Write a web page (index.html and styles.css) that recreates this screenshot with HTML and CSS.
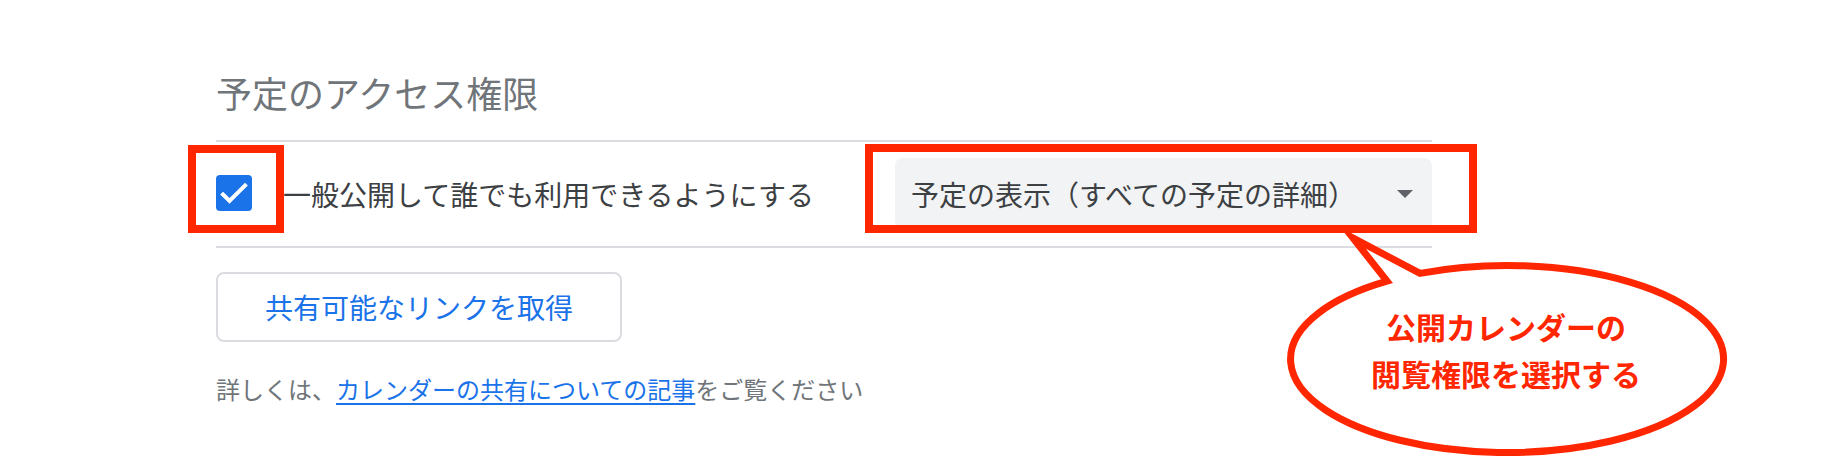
FILE: index.html
```html
<!DOCTYPE html>
<html lang="ja">
<head>
<meta charset="utf-8">
<title>予定のアクセス権限</title>
<link rel="stylesheet" href="styles.css">
</head>
<body>
<div class="page">
  <section class="section">
    <h2 class="title">予定のアクセス権限</h2>
    <div class="row">
      <span class="checkbox annotated-check">
        <svg width="36" height="36" viewBox="0 0 36 36" aria-hidden="true">
          <rect x="0" y="0" width="36" height="36" rx="4" fill="#1a73e8"/>
          <path d="M7 19.5 L13.5 26 L29 10.5" fill="none" stroke="#fff" stroke-width="4" stroke-linecap="square" stroke-linejoin="miter"/>
        </svg>
      </span>
      <span class="label">一般公開して誰でも利用できるようにする</span>
      <div class="select annotated-select">
        <span class="select-text">予定の表示（すべての予定の詳細）</span>
        <span class="arrow"></span>
      </div>
    </div>
    <button class="link-button">共有可能なリンクを取得</button>
    <p class="help">詳しくは、<a class="help-link" href="#">カレンダーの共有についての記事</a>をご覧ください</p>
  </section>

  <div class="bubble">
    <svg class="bubble-shape" width="460" height="240" viewBox="1280 230 460 240" aria-hidden="true">
      <path d="M1420 273.4 A216.5 93.5 0 1 1 1387 281.2 L1353 238 Z" fill="#fff" stroke="#ff2600" stroke-width="7" stroke-linejoin="miter" stroke-miterlimit="10"/>
    </svg>
    <div class="bubble-text">公開カレンダーの<br>閲覧権限を選択する</div>
  </div>
</div>
</body>
</html>
```
FILE: styles.css
```css
* { box-sizing: border-box; }

html, body {
  margin: 0;
  padding: 0;
  background: #ffffff;
}

body {
  font-family: "Noto Sans CJK JP", "Noto Sans", "Liberation Sans", sans-serif;
  width: 1828px;
  height: 472px;
  overflow: hidden;
}

.page {
  position: relative;
  width: 1828px;
  height: 472px;
  padding: 68px 0 0 216px;
}

.section {
  width: 1216px;
}

.title {
  margin: 0;
  font-size: 36px;
  line-height: 48px;
  font-weight: 400;
  color: #70757a;
  padding-bottom: 24px;
  border-bottom: 2px solid #dadce0;
}

.row {
  display: flex;
  align-items: center;
  height: 106px;
  border-bottom: 2px solid #dadce0;
}

.checkbox {
  position: relative;
  display: flex;
  width: 36px;
  height: 36px;
  margin-bottom: 2px;
}

.annotated-check::after {
  content: "";
  position: absolute;
  left: -28px;
  top: -30px;
  right: -32px;
  bottom: -22px;
  border: 8px solid #ff2600;
}

.label {
  margin-left: 31px;
  font-size: 28px;
  line-height: 40px;
  color: #3c4043;
}

.select {
  position: relative;
  margin-left: auto;
  width: 537px;
  height: 72px;
  display: flex;
  align-items: center;
  padding: 0 19px 0 16px;
  background: #f1f3f4;
  border-radius: 8px;
}

.annotated-select::after {
  content: "";
  position: absolute;
  left: -30px;
  top: -14px;
  right: -45px;
  bottom: -3px;
  border: 8px solid #ff2600;
}

.select-text {
  font-size: 28px;
  line-height: 40px;
  color: #3c4043;
}

.arrow {
  margin-left: auto;
  width: 0;
  height: 0;
  border-left: 8.5px solid transparent;
  border-right: 8.5px solid transparent;
  border-top: 8px solid #5f6368;
}

.link-button {
  display: block;
  margin-top: 24px;
  width: 406px;
  height: 70px;
  padding: 0;
  background: #ffffff;
  border: 2px solid #dadce0;
  border-radius: 8px;
  font-family: inherit;
  font-size: 28px;
  line-height: 40px;
  color: #1a73e8;
}

.help {
  margin: 31px 0 0;
  font-size: 24px;
  line-height: 32px;
  color: #70757a;
}

.help-link {
  color: #1a73e8;
  text-decoration: underline;
  text-decoration-thickness: 2px;
  text-underline-offset: 4px;
}

.bubble {
  position: absolute;
  left: 1280px;
  top: 230px;
  width: 460px;
  height: 240px;
}

.bubble-shape {
  display: block;
}

.bubble-text {
  position: absolute;
  left: 6px;
  top: 73px;
  width: 440px;
  text-align: center;
  font-size: 30px;
  line-height: 47px;
  font-weight: 700;
  color: #ff2600;
}
```
